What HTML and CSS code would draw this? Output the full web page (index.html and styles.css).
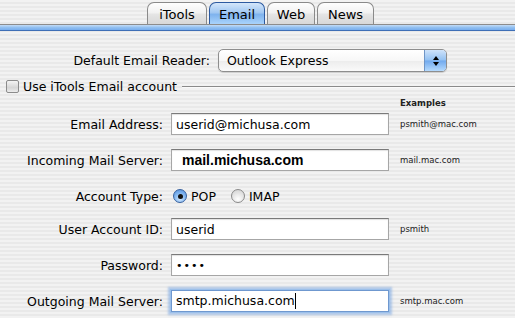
FILE: index.html
```html
<!DOCTYPE html>
<html>
<head>
<meta charset="utf-8">
<link rel="stylesheet" href="styles.css">
</head>
<body>
<div class="tabbar">
  <div class="tab t-itools">iTools</div>
  <div class="tab t-email active">Email</div>
  <div class="tab t-web">Web</div>
  <div class="tab t-news">News</div>
</div>
<div class="bluebar"></div>
<div class="panel">
  <div class="reader-row">
    <div class="reader-label">Default Email Reader:</div>
    <div class="popup">
      <div class="popup-text">Outlook Express</div>
      <div class="popup-arrows">
        <svg width="8" height="12" viewBox="0 0 8 12"><path d="M4 1 L7 5 L1 5 Z" fill="#000"/><path d="M1 7 L7 7 L4 11 Z" fill="#000"/></svg>
      </div>
    </div>
  </div>
  <div class="check-row">
    <div class="checkbox"></div>
    <div class="check-label">Use iTools Email account</div>
    <div class="sep-line"></div>
  </div>
  <div class="examples-head">Examples</div>

  <div class="row first">
    <div class="label">Email Address:</div>
    <div class="field">userid@michusa.com</div>
    <div class="example">psmith@mac.com</div>
  </div>
  <div class="row">
    <div class="label">Incoming Mail Server:</div>
    <div class="field bold">mail.michusa.com</div>
    <div class="example">mail.mac.com</div>
  </div>
  <div class="row">
    <div class="label">Account Type:</div>
    <div class="radios">
      <div class="radio on"><span class="dot"></span></div>
      <div class="radio-label">POP</div>
      <div class="radio"></div>
      <div class="radio-label">IMAP</div>
    </div>
  </div>
  <div class="row tight">
    <div class="label">User Account ID:</div>
    <div class="field">userid</div>
    <div class="example">psmith</div>
  </div>
  <div class="row">
    <div class="label">Password:</div>
    <div class="field dots">••••</div>
  </div>
  <div class="row">
    <div class="label">Outgoing Mail Server:</div>
    <div class="field focus"><span class="caret">smtp.michusa.com</span></div>
    <div class="example">smtp.mac.com</div>
  </div>
</div>
</body>
</html>
```
FILE: styles.css
```css
html, body {
  margin: 0;
  padding: 0;
}
body {
  width: 515px;
  height: 318px;
  overflow: hidden;
  font-family: "DejaVu Sans", "Noto Sans", sans-serif;
  font-size: 12.5px;
  color: #000;
  background: repeating-linear-gradient(to bottom, #f2f2f2 0 2px, #e9e9e9 2px 4px);
}
.tabbar {
  height: 24px;
  display: flex;
  align-items: flex-end;
  padding-left: 147px;
  gap: 2px;
}
.tab {
  box-sizing: border-box;
  height: 22px;
  border: 1px solid #8a8a8a;
  border-bottom: none;
  border-radius: 7px 7px 0 0;
  background: linear-gradient(#fefefe, #f2f2f2 45%, #e4e4e4 55%, #d8d8d8);
  display: flex;
  align-items: center;
  justify-content: center;
  font-size: 13px;
  padding-top: 1px;
}
.t-itools { width: 60px; }
.t-email { width: 56px; }
.t-web { width: 48px; }
.t-news { width: 57px; }
.tab.active {
  border-color: #2d5aa0;
  background: linear-gradient(#d4e6fa, #a2c8f2 45%, #7fb3ee 55%, #a9d3fb);
}
.bluebar {
  box-sizing: border-box;
  height: 7px;
  border-top: 1px solid #8c8c8c;
  border-bottom: 1px solid #3f6fb6;
  background: linear-gradient(#c4dcf6, #92c0f1 50%, #78aded);
}
.panel {
  display: flex;
  flex-direction: column;
}
.reader-row {
  display: flex;
  align-items: center;
  margin-top: 18px;
  height: 23px;
}
.reader-label {
  width: 210px;
  text-align: right;
  margin-right: 8px;
}
.popup {
  box-sizing: border-box;
  width: 229px;
  height: 23px;
  border: 1px solid #8e8e8e;
  border-radius: 5px;
  display: flex;
  overflow: hidden;
  background: linear-gradient(#ffffff, #f7f7f7 50%, #ececec 51%, #fafafa);
  box-shadow: 0 1px 1px rgba(0,0,0,0.15);
}
.popup-text {
  flex: 1;
  padding-left: 8px;
  display: flex;
  align-items: center;
}
.popup-arrows {
  width: 21px;
  border-left: 1px solid #6f95c6;
  background: linear-gradient(#cfe3fa, #93c1f2 48%, #72aaee 52%, #b5dafd);
  display: flex;
  align-items: center;
  justify-content: center;
}
.check-row {
  display: flex;
  align-items: center;
  height: 16px;
  margin-top: 6px;
  padding-left: 6px;
}
.checkbox {
  box-sizing: border-box;
  width: 13px;
  height: 13px;
  border: 1px solid #8c8c8c;
  border-radius: 2px;
  background: linear-gradient(#f4f4f4, #d6d6d6 60%, #ececec);
  margin-right: 4px;
}
.check-label {
  white-space: nowrap;
}
.sep-line {
  flex: 1;
  height: 1px;
  background: #8a8a8a;
  border-bottom: 1px solid #fafafa;
  margin-left: 5px;
  margin-top: 2px;
}
.examples-head {
  margin-top: 3px;
  padding-left: 400px;
  font-size: 8.5px;
  font-weight: bold;
  line-height: 12px;
  color: #222;
}
.row {
  display: flex;
  align-items: center;
  height: 22px;
  margin-top: 14px;
}
.row.first { margin-top: 4px; }
.row.tight { margin-top: 11px; }
.label {
  width: 163px;
  text-align: right;
  margin-right: 8px;
  white-space: nowrap;
}
.field {
  box-sizing: border-box;
  width: 218px;
  height: 22px;
  border: 1px solid #a6a6a6;
  border-top-color: #7a7a7a;
  background: #fff;
  box-shadow: inset 0 1px 1px rgba(0,0,0,0.12);
  padding-left: 4px;
  display: flex;
  align-items: center;
  white-space: nowrap;
}
.field.bold {
  font-family: "Liberation Sans", Arial, sans-serif;
  font-weight: bold;
  font-size: 14px;
  padding-left: 10px;
}
.field.dots {
  font-size: 11px;
  letter-spacing: 1px;
}
.field.focus {
  border-color: #6f98cf;
  box-shadow: 0 0 0 1px #9cc0ea, 0 0 2px 3px rgba(120,165,225,0.55);
}
.caret {
  border-right: 1px solid #000;
  padding-right: 0;
  line-height: 16px;
}
.example {
  margin-left: 11px;
  font-size: 8.5px;
  color: #222;
  white-space: nowrap;
}
.radios {
  display: flex;
  align-items: center;
  margin-left: 2px;
}
.radio {
  box-sizing: border-box;
  width: 14px;
  height: 14px;
  border-radius: 50%;
  border: 1px solid #8a8a8a;
  background: radial-gradient(circle at 50% 75%, #ffffff, #e6e6e6 50%, #cfcfcf);
  display: flex;
  align-items: center;
  justify-content: center;
}
.radio.on {
  border-color: #36609f;
  background: radial-gradient(circle at 50% 75%, #cde6ff, #7fb4ef 55%, #4e8ad8);
}
.dot {
  width: 5px;
  height: 5px;
  border-radius: 50%;
  background: #111;
}
.radio-label {
  margin-left: 4px;
  margin-right: 15px;
}
```
